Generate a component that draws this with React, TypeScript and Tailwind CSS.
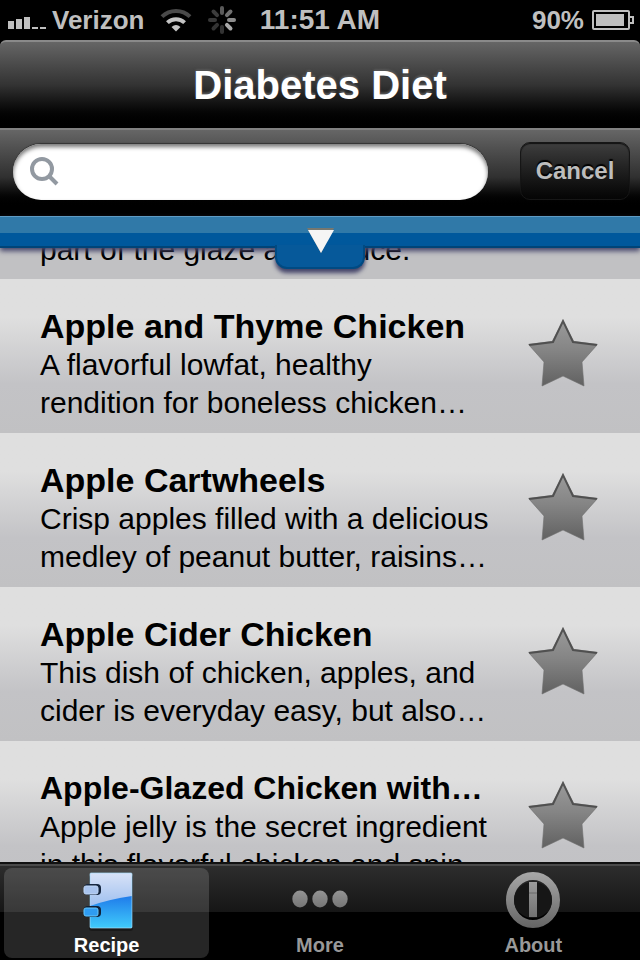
import React from 'react';

interface Recipe {
  title: string;
  lines: string[];
  compact?: boolean;
}

const recipes: Recipe[] = [
  { title: 'Apple and Thyme Chicken', lines: ['A flavorful lowfat, healthy', 'rendition for boneless chicken…'] },
  { title: 'Apple Cartwheels', lines: ['Crisp apples filled with a delicious', 'medley of peanut butter, raisins…'] },
  { title: 'Apple Cider Chicken', lines: ['This dish of chicken, apples, and', 'cider is everyday easy, but also…'] },
  { title: 'Apple-Glazed Chicken with…', lines: ['Apple jelly is the secret ingredient', 'in this flavorful chicken and spin…'], compact: true },
];

// Spinner spokes, clockwise from the top
const spokes = ['#5a5a5a', '#707070', '#8c8c8c', '#a8a8a8', '#333333', '#333333', '#383838', '#3c3c3c'];

const SignalIcon = () => (
  <svg width="39" height="18" viewBox="0 0 39 18" fill="#bfbfbf" aria-hidden="true">
    <rect x="0" y="10" width="6" height="8" />
    <rect x="8" y="8" width="6" height="10" />
    <rect x="16" y="6" width="6" height="12" />
    <rect x="24" y="16" width="6" height="2" />
    <rect x="32" y="16" width="6" height="2" />
  </svg>
);

const WifiIcon = () => (
  <svg width="32" height="24" viewBox="0 0 32 24" fill="none" strokeWidth="4" aria-hidden="true">
    <path d="M2 8.6a20 20 0 0 1 28 0" stroke="#4a4a4a" />
    <path d="M7.4 14.6a12.5 12.5 0 0 1 17.2 0" stroke="#c4c4c4" />
    <path d="M11.5 19q4.500-4 9 0L16 23.500z" fill="#c4c4c4" />
  </svg>
);

const SpinnerIcon = () => (
  <svg width="28" height="28" viewBox="0 0 28 28" strokeWidth="4" strokeLinecap="round" aria-hidden="true">
    {spokes.map((color, i) => (
      <path key={i} d="M14 2v5" stroke={color} transform={`rotate(${i * 45} 14 14)`} />
    ))}
  </svg>
);

const BatteryIcon = () => (
  <svg width="42" height="20" viewBox="0 0 42 20" fill="none" stroke="#bfbfbf" strokeWidth="2" aria-hidden="true">
    <rect x="1" y="1" width="36" height="18" rx="1" />
    <rect x="4" y="4" width="28" height="12" fill="#bfbfbf" stroke="none" />
    <path d="M38 7h3v6h-3" />
  </svg>
);

const StarIcon = () => (
  <svg width="72" height="70" viewBox="0 0 72 70" aria-hidden="true">
    <defs>
      <linearGradient id="star" x1="0" y1="0" x2="0" y2="1">
        <stop offset="0" stopColor="#9b9b9b" />
        <stop offset="0.45" stopColor="#858585" />
        <stop offset="1" stopColor="#616161" />
      </linearGradient>
    </defs>
    <path d="M35 1l11 21 24 3-16 18 2 24-21-10-21 10 2-24L0 25l24-3z" fill="url(#star)" />
    <path d="M1 26l24-3L35 2l10 21 24 3" fill="none" stroke="#454545" strokeWidth="2" strokeOpacity="0.85" />
    <path d="M1 26l15 17-2 24 21-10 21 10-2-24 15-17" fill="none" stroke="#707070" strokeOpacity="0.6" />
  </svg>
);

const NotebookIcon = () => (
  <svg width="52" height="60" viewBox="0 0 52 60" aria-hidden="true">
    <defs>
      <linearGradient id="cover" x1="0" y1="0" x2="0" y2="1">
        <stop offset="0" stopColor="#d8e2f7" />
        <stop offset="1" stopColor="#78a9ea" />
      </linearGradient>
      <linearGradient id="gloss" x1="0" y1="0" x2="0" y2="1">
        <stop offset="0" stopColor="#1f7bea" />
        <stop offset="1" stopColor="#40cbfb" />
      </linearGradient>
    </defs>
    <rect x="8" y="3" width="44" height="56" rx="3" fill="#111111" opacity="0.6" />
    <rect x="9" y="1" width="42" height="55" rx="1" fill="url(#cover)" />
    <path d="M9 34q20-7 42-10v31q0 1-1 1H10q-1 0-1-1z" fill="url(#gloss)" />
    <rect x="9" y="1" width="42" height="55" rx="1" fill="none" stroke="#a5dcfa" strokeOpacity="0.7" />
    <rect x="3" y="12" width="17" height="11" rx="4" fill="#15263f" />
    <rect x="3" y="14" width="14" height="8" rx="2" fill="#a9c4ee" stroke="#c2d8f7" />
    <rect x="3" y="34" width="17" height="11" rx="4" fill="#0d2038" />
    <rect x="3" y="36" width="14" height="8" rx="2" fill="#2f9cf2" stroke="#68c8fb" />
  </svg>
);

const DotsIcon = () => (
  <svg width="58" height="60" viewBox="0 0 58 60" aria-hidden="true">
    <defs>
      <linearGradient id="dot" x1="0" y1="0" x2="0" y2="1">
        <stop offset="0" stopColor="#949494" />
        <stop offset="1" stopColor="#757575" />
      </linearGradient>
    </defs>
    {[9, 29, 49].map((cx) => (
      <ellipse key={cx} cx={cx} cy="27" rx="7.7" ry="8.5" fill="url(#dot)" />
    ))}
  </svg>
);

const InfoIcon = () => (
  <svg width="56" height="60" viewBox="0 0 56 60" aria-hidden="true">
    <defs>
      <linearGradient id="info" gradientUnits="userSpaceOnUse" x1="0" y1="0" x2="0" y2="58">
        <stop offset="0" stopColor="#a8a8a8" />
        <stop offset="1" stopColor="#626262" />
      </linearGradient>
    </defs>
    <ellipse cx="28" cy="28" rx="23" ry="24" fill="none" stroke="url(#info)" strokeWidth="8" />
    <ellipse cx="28" cy="28" rx="19" ry="18" fill="#161616" />
    <path d="M24 10h8v35h-8z" fill="url(#info)" />
    <path d="M24 21h8" stroke="#686868" />
  </svg>
);

const tabs = [
  { label: 'Recipe', icon: <NotebookIcon />, active: true },
  { label: 'More', icon: <DotsIcon />, active: false },
  { label: 'About', icon: <InfoIcon />, active: false },
];

const StatusBar = () => (
  <div className="grid h-10 grid-cols-[1fr_auto_1fr] items-center bg-black px-[6px] font-bold text-[#bfbfbf]">
    <div className="flex items-center pl-[2px]">
      <SignalIcon />
      <span className="ml-[5px] text-[26px] leading-10">Verizon</span>
      <span className="ml-4"><WifiIcon /></span>
      <span className="ml-4"><SpinnerIcon /></span>
    </div>
    <span className="text-[28px] leading-10">11:51 AM</span>
    <div className="flex items-center justify-end gap-2">
      <span className="text-[26px] leading-10">90%</span>
      <BatteryIcon />
    </div>
  </div>
);

const RecipeRow: React.FC<{ recipe: Recipe }> = ({ recipe }) => (
  <li className="flex h-[154px] shrink-0 items-start bg-linear-to-b from-[#dfdfdf] from-25% via-[#c3c3c6] via-68% to-[#c1c1c3] pt-7 pr-10 pl-10">
    <div className="min-w-0 flex-1">
      <h2
        className={
          recipe.compact
            ? 'text-[32px] leading-[39px] font-bold whitespace-nowrap'
            : 'text-[34px] leading-[39px] font-bold whitespace-nowrap'
        }
      >
        {recipe.title}
      </h2>
      <p className="text-[30px] leading-[38px] whitespace-nowrap">
        {recipe.lines[0]}
        <br />
        {recipe.lines[1]}
      </p>
    </div>
    <button type="button" aria-label={`Add ${recipe.title} to favorites`} className="mt-3">
      <StarIcon />
    </button>
  </li>
);

export default function App() {
  return (
    <div className="flex h-screen flex-col overflow-hidden bg-black font-['Liberation_Sans',Arial,sans-serif] text-black">
      <StatusBar />

      <header className="flex h-[88px] shrink-0 items-center justify-center rounded-t-md border-t-2 border-[#8a8a8a] bg-linear-to-b from-[#666666] via-[#333333] to-black">
        <h1 className="text-[40px] leading-[48px] font-bold text-white [text-shadow:0_-2px_2px_#555]">Diabetes Diet</h1>
      </header>

      <form className="flex h-[88px] shrink-0 items-start gap-8 border-t-2 border-[#808080] bg-linear-to-b from-[#666666] via-[#303030] via-55% to-black to-90% pt-3 pr-[10px] pl-[13px]">
        <label className="mt-[2px] flex h-14 flex-1 items-center gap-2 rounded-full bg-white pl-4 shadow-[inset_0_3px_4px_#777,0_-1px_1px_#333]">
          <svg width="30" height="32" viewBox="0 0 30 32" fill="none" stroke="#9299a1" strokeWidth="4" aria-hidden="true">
            <circle cx="13" cy="13" r="10" />
            <path d="M20 20l8 8" />
          </svg>
          <input type="search" aria-label="Search recipes" className="min-w-0 flex-1 bg-transparent text-[28px] outline-none" />
        </label>
        <button
          type="button"
          className="h-[58px] w-[110px] rounded-[10px] border border-[#161616] bg-linear-to-b from-[#3e3e3e] to-[#050505] text-2xl font-bold text-[#bdbdbd] shadow-[inset_0_1px_1px_#111] [text-shadow:0_-2px_1px_#000]"
        >
          Cancel
        </button>
      </form>

      <div className="relative z-10 h-8 shrink-0 border-t border-b-2 border-t-[#5f9cc4] border-b-[#004478] bg-linear-to-b from-[#3079a8] from-55% to-[#00589c] to-55% shadow-[0_3px_5px_#45456a]">
        <button
          type="button"
          aria-label="Show filters"
          className="absolute top-[28px] left-1/2 h-6 w-[90px] -translate-x-1/2 rounded-b-xl border-2 border-t-0 border-[#004a82] bg-[#06599a] shadow-[0_4px_4px_#45456a]"
        />
        <svg className="absolute top-[10px] left-1/2 -translate-x-1/2" width="28" height="28" viewBox="0 0 28 28" aria-hidden="true">
          <path d="M1 1h27L15 26z" fill="#77776f" />
          <path d="M2 3h26L15 26z" fill="#f5f5f5" />
        </svg>
      </div>

      <main className="flex min-h-0 flex-1 flex-col overflow-hidden bg-[#c1c1c3]">
        <div className="flex h-[31px] shrink-0 items-end overflow-hidden px-10 pb-[10px]">
          <p className="text-[30px] leading-[38px] whitespace-nowrap">part of the glaze and sauce.</p>
        </div>
        <ul className="flex flex-col">
          {recipes.map((recipe) => (
            <RecipeRow key={recipe.title} recipe={recipe} />
          ))}
        </ul>
      </main>

      <nav className="grid h-[98px] shrink-0 grid-cols-3 gap-2 border-t-2 border-[#111111] bg-linear-to-b from-[#2e2e2e] to-[#161616] to-50% px-1 pt-1 pb-1 shadow-[inset_0_2px_0_#4a4a4a,inset_0_-48px_0_#000]">
        {tabs.map((tab) => (
          <button
            key={tab.label}
            type="button"
            className={
              tab.active
                ? 'flex flex-col items-center rounded-lg bg-white/15 text-white'
                : 'flex flex-col items-center rounded-lg text-[#999999]'
            }
          >
            <span className="mt-1">{tab.icon}</span>
            <span className="text-xl leading-[26px] font-bold">{tab.label}</span>
          </button>
        ))}
      </nav>
    </div>
  );
}
